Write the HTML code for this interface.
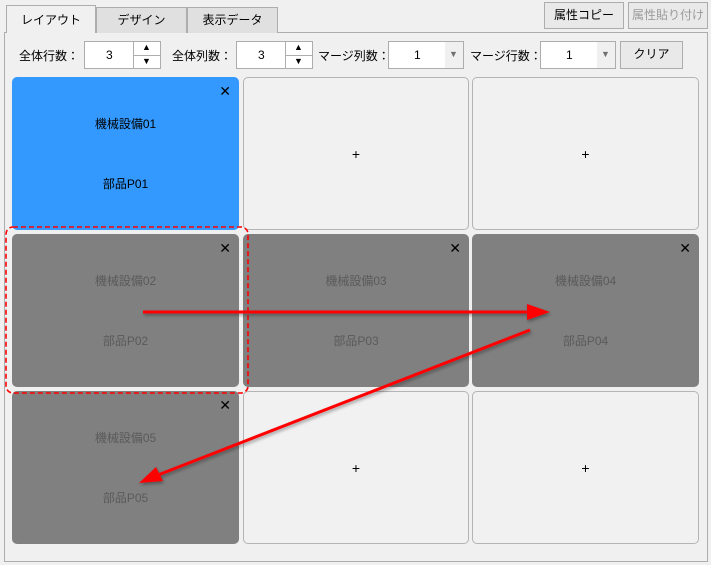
<!DOCTYPE html>
<html><head><meta charset="utf-8"><style>
*{box-sizing:border-box;margin:0;padding:0}
body{width:711px;height:565px;background:#f0f0f0;position:relative;overflow:hidden;font-family:"Liberation Sans","Noto Sans CJK JP",sans-serif;font-size:12px;color:#000}
.a{position:absolute}
.tab{position:absolute;top:7px;height:26px;border:1px solid #adadad;border-bottom:none;background:#e0e0e0;text-align:center;line-height:24px}
.btn{position:absolute;border:1px solid #adadad;background:#e9e9e9;text-align:center;line-height:25px}
.in{position:absolute;background:#fff;border:1px solid #adadad;height:28px;top:41px}
.lbl{position:absolute;top:47px}
.cell{position:absolute;border-radius:5px;text-align:center}
.e{background:#f1f1f1;border:1px solid #b4b4b4;line-height:152px;font-size:14px}
.g{background:#808080;color:#5a5a5a}
.b{background:#3399ff;color:#000}
.t1{position:absolute;left:0;right:0;top:38px}
.t2{position:absolute;left:0;right:0;top:98px}
.x{position:absolute;right:8px;top:6px;font-size:14px;color:#000}
</style></head><body>
<div class="a" style="left:4px;top:32px;width:704px;height:530px;border:1px solid #adadad;background:#f0f0f0"></div>
<div class="tab" style="left:6px;width:90px;background:#f0f0f0;height:28px;top:5px;line-height:28px">レイアウト</div>
<div class="tab" style="left:96px;width:91px">デザイン</div>
<div class="tab" style="left:187px;width:91px">表示データ</div>
<div class="btn" style="left:544px;top:2px;width:80px;height:27px">属性コピー</div>
<div class="btn" style="left:628px;top:2px;width:80px;height:27px;color:#9a9a9a">属性貼り付け</div>

<div class="lbl" style="left:19px">全体行数：</div>
<div class="in" style="left:84px;width:77px"><span class="a" style="left:21px;top:6px">3</span><div class="a" style="left:48px;top:0;width:1px;height:26px;background:#adadad"></div><div class="a" style="left:49px;top:13px;width:26px;height:1px;background:#adadad"></div><span class="a" style="left:57px;top:0;font-size:9px">▲</span><span class="a" style="left:57px;top:14px;font-size:9px">▼</span></div>
<div class="lbl" style="left:172px">全体列数：</div>
<div class="in" style="left:236px;width:77px"><span class="a" style="left:21px;top:6px">3</span><div class="a" style="left:48px;top:0;width:1px;height:26px;background:#adadad"></div><div class="a" style="left:49px;top:13px;width:26px;height:1px;background:#adadad"></div><span class="a" style="left:57px;top:0;font-size:9px">▲</span><span class="a" style="left:57px;top:14px;font-size:9px">▼</span></div>
<div class="lbl" style="left:318px">マージ列数：</div>
<div class="in" style="left:388px;width:76px"><span class="a" style="left:25px;top:6px">1</span><div class="a" style="left:56px;top:0;width:18px;height:26px;background:#f0f0f0"></div><span class="a" style="left:60px;top:7px;font-size:9px;color:#707070">▼</span></div>
<div class="lbl" style="left:470px">マージ行数：</div>
<div class="in" style="left:540px;width:76px"><span class="a" style="left:25px;top:6px">1</span><div class="a" style="left:56px;top:0;width:18px;height:26px;background:#f0f0f0"></div><span class="a" style="left:60px;top:7px;font-size:9px;color:#707070">▼</span></div>
<div class="btn" style="left:620px;top:41px;width:63px;height:28px">クリア</div>

<div class="cell b" style="left:12px;top:77px;width:227px;height:153px"><span class="x">✕</span><div class="t1">機械設備01</div><div class="t2">部品P01</div></div>
<div class="cell e" style="left:243px;top:77px;width:226px;height:153px">+</div>
<div class="cell e" style="left:472px;top:77px;width:227px;height:153px">+</div>

<div class="cell g" style="left:12px;top:234px;width:227px;height:153px"><span class="x">✕</span><div class="t1">機械設備02</div><div class="t2">部品P02</div></div>
<div class="cell g" style="left:243px;top:234px;width:226px;height:153px"><span class="x">✕</span><div class="t1">機械設備03</div><div class="t2">部品P03</div></div>
<div class="cell g" style="left:472px;top:234px;width:227px;height:153px"><span class="x">✕</span><div class="t1">機械設備04</div><div class="t2">部品P04</div></div>

<div class="cell g" style="left:12px;top:391px;width:227px;height:153px"><span class="x">✕</span><div class="t1">機械設備05</div><div class="t2">部品P05</div></div>
<div class="cell e" style="left:243px;top:391px;width:226px;height:153px">+</div>
<div class="cell e" style="left:472px;top:391px;width:227px;height:153px">+</div>

<svg class="a" style="left:0;top:0" width="711" height="565">
<defs><filter id="s"><feDropShadow dx="1" dy="2" stdDeviation="1.5" flood-color="#000" flood-opacity="0.35"/></filter></defs>
<rect x="6" y="227" width="242" height="166" rx="7" fill="none" stroke="#f00" stroke-width="1.6" stroke-dasharray="5,3"/>
<g filter="url(#s)" fill="#f00" stroke="#f00">
<line x1="143" y1="312" x2="530" y2="312" stroke-width="3"/>
<polygon points="527,304 550,312 527,320" stroke="none"/>
<line x1="530" y1="330" x2="158" y2="475" stroke-width="3"/>
<polygon points="139,483 156,467 163,481" stroke="none"/>
</g>
</svg>
</body></html>
